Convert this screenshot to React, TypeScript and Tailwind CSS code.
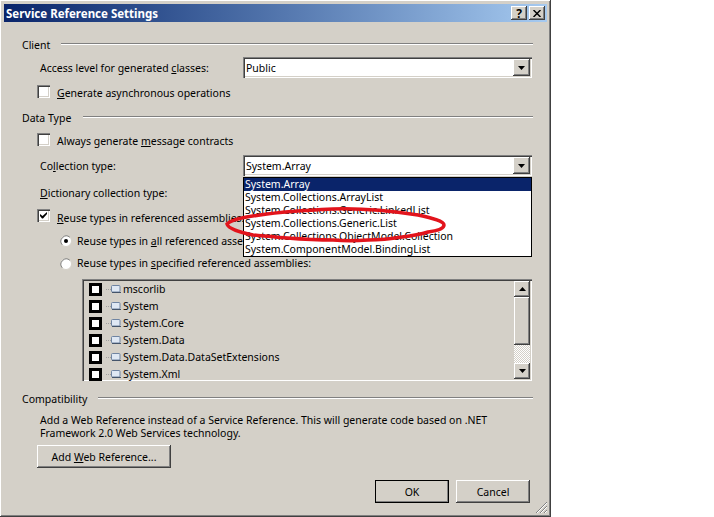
const raised = "shadow-[inset_-1px_-1px_0_#404040,inset_1px_1px_0_#fff,inset_-2px_-2px_0_#808080]"
const sunken = "shadow-[inset_1px_1px_0_#808080,inset_2px_2px_0_#404040,inset_-1px_-1px_0_#fff,inset_-2px_-2px_0_#d4d0c8]"

const dropItems = [
  "System.Array",
  "System.Collections.ArrayList",
  "System.Collections.Generic.LinkedList",
  "System.Collections.Generic.List",
  "System.Collections.ObjectModel.Collection",
  "System.ComponentModel.BindingList",
]

const assemblies = ["mscorlib", "System", "System.Core", "System.Data", "System.Data.DataSetExtensions", "System.Xml"]

function Arrow({ up = false }: { up?: boolean }) {
  return (
    <svg width="7" height="4" viewBox="0 0 7 4" className="block">
      <path d={up ? "M3.5 0 L7 4 L0 4 Z" : "M0 0 L7 0 L3.5 4 Z"} fill="#000" />
    </svg>
  )
}

function Section({ label, lineLeft }: { label: string; lineLeft: string }) {
  return (
    <div className="flex items-center h-[13px] pl-[22px] pr-[18px]">
      <span className="shrink-0 -mt-[1px]">{label}</span>
      <div className={`flex-1 border-t border-t-[#808080] border-b border-b-white h-[2px] mb-[3px] ${lineLeft}`} />
    </div>
  )
}

function Checkbox({ checked = false }: { checked?: boolean }) {
  return (
    <div className={`w-[13px] h-[13px] bg-white shrink-0 flex items-center justify-center ${sunken}`}>
      {checked && (
        <svg width="7" height="7" viewBox="0 0 7 7">
          <path d="M0 2 L0 4 L2 6.5 L3 6.5 L7 2 L7 0 L2.5 4 Z" fill="#000" />
        </svg>
      )}
    </div>
  )
}

function Radio({ checked = false }: { checked?: boolean }) {
  return (
    <svg width="12" height="12" viewBox="0 0 12 12" className="shrink-0">
      <circle cx="6" cy="6" r="5.5" fill="#fff" stroke="#d4d0c8" />
      <path d="M2.2 9.8 A5.4 5.4 0 0 1 9.8 2.2" fill="none" stroke="#808080" />
      {checked && <circle cx="6" cy="6" r="2" fill="#000" />}
    </svg>
  )
}

function Combo({ value }: { value: string }) {
  return (
    <div className={`w-[289px] h-[21px] bg-white flex items-center pl-[3px] pr-[2px] ${sunken}`}>
      <span className="flex-1 mt-[1px]">{value}</span>
      <div className={`w-[17px] h-[17px] bg-[#d4d0c8] flex items-center justify-center ${raised}`}>
        <Arrow />
      </div>
    </div>
  )
}

function Button({ children, className = "" }: { children: React.ReactNode; className?: string }) {
  return (
    <div className={`h-[23px] bg-[#d4d0c8] flex items-center justify-center ${raised} ${className}`}>
      <span className="mt-[2px]">{children}</span>
    </div>
  )
}

export default function App() {
  return (
    <div className="w-[714px] h-[517px] bg-white text-[#000] text-[10.5px] leading-[13px] overflow-hidden font-['Noto_Sans','Open_Sans',sans-serif]">
      <div className="relative w-[551px] h-[517px] bg-[#d4d0c8] flex flex-col px-[4px] pt-[4px] shadow-[inset_-1px_-1px_0_#404040,inset_1px_1px_0_#fff,inset_-2px_-2px_0_#808080]">
        {/* title bar */}
        <div className="h-[18px] shrink-0 pl-[2px] pr-[2px] flex items-center justify-between bg-gradient-to-r from-[#0a246a] to-[#a6caf0]">
          <span className="text-white font-bold text-[11.5px]">Service Reference Settings</span>
          <div className="flex gap-[2px]">
            <div className={`w-[16px] h-[14px] bg-[#d4d0c8] flex items-center justify-center font-bold text-[12px] ${raised}`}>?</div>
            <div className={`w-[16px] h-[14px] bg-[#d4d0c8] flex items-center justify-center ${raised}`}>
              <svg width="8" height="7" viewBox="0 0 8 7">
                <path d="M0.5 0 L7.5 7 M7.5 0 L0.5 7" stroke="#000" strokeWidth="1.5" />
              </svg>
            </div>
          </div>
        </div>

        {/* body */}
        <div className="-mx-[4px] flex flex-col flex-1 pt-[17px]">
          <Section label="Client" lineLeft="ml-[11px]" />

          <div className="flex items-center justify-between pl-[40px] pr-[19px] mt-[5px]">
            <span className="mt-[2px]">Access level for generated <u>c</u>lasses:</span>
            <Combo value="Public" />
          </div>

          <div className="flex items-center h-[13px] gap-[7px] pl-[37px] mt-[7px]">
            <Checkbox />
            <span className="mt-[4px]"><u>G</u>enerate asynchronous operations</span>
          </div>

          <div className="mt-[14px]">
            <Section label="Data Type" lineLeft="ml-[12px]" />
          </div>

          <div className="flex items-center h-[13px] gap-[7px] pl-[37px] mt-[8px]">
            <Checkbox />
            <span className="mt-[4px]">Always generate <u>m</u>essage contracts</span>
          </div>

          <div className="flex items-center justify-between pl-[40px] pr-[19px] mt-[9px]">
            <span className="mt-[2px]">Co<u>l</u>lection type:</span>
            <Combo value="System.Array" />
          </div>

          <div className="pl-[40px] mt-[11px]">
            <span><u>D</u>ictionary collection type:</span>
          </div>

          <div className="flex items-center h-[13px] gap-[7px] pl-[37px] mt-[9px]">
            <Checkbox checked />
            <span className="mt-[6px]"><u>R</u>euse types in referenced assemblies:</span>
          </div>

          <div className="flex items-center h-[13px] gap-[5px] pl-[60px] mt-[12px]">
            <Radio checked />
            <span className="mt-[2px]">Reuse types in <u>a</u>ll referenced assemblies</span>
          </div>

          <div className="flex items-center h-[13px] gap-[5px] pl-[60px] mt-[10px]">
            <Radio />
            <span>Reuse types in <u>s</u>pecified referenced assemblies:</span>
          </div>

          {/* assemblies list */}
          <div className={`ml-[82px] mt-[9px] w-[450px] h-[102px] flex p-[2px] ${sunken}`}>
            <div className="flex-1 pl-[5px] flex flex-col">
              {assemblies.map((name) => (
                <div key={name} className="h-[17px] flex items-center shrink-0">
                  <div className="w-[13px] h-[13px] border-[3px] border-black bg-white shrink-0 -mt-[1px]" />
                  <div className="ml-[4px] w-[5px] border-t border-dotted border-[#a0a0a0]" />
                  <svg width="10" height="9" viewBox="0 0 10 9" className="shrink-0">
                    <rect x="0.5" y="0.5" width="8.5" height="6.5" rx="1" fill="#dfe8f4" stroke="#6f84a2" />
                    <path d="M1 7.5 H10" stroke="#44546a" />
                  </svg>
                  <span className="ml-[2px]">{name}</span>
                </div>
              ))}
            </div>
            <div className="w-[16px] flex flex-col">
              <div className={`h-[16px] bg-[#d4d0c8] flex items-center justify-center ${raised}`}><Arrow up /></div>
              <div className={`h-[48px] bg-[#d4d0c8] ${raised}`} />
              <div className="flex-1 bg-[repeating-conic-gradient(#d4d0c8_0_25%,#fff_0_50%)] bg-[length:2px_2px]" />
              <div className={`h-[16px] bg-[#d4d0c8] flex items-center justify-center ${raised}`}><Arrow /></div>
            </div>
          </div>

          <div className="mt-[12px]">
            <Section label="Compatibility" lineLeft="ml-[11px]" />
          </div>

          <div className="pl-[40px] mt-[8px]">
            Add a Web Reference instead of a Service Reference. This will generate code based on .NET<br />
            Framework 2.0 Web Services technology.
          </div>

          <div className="pl-[37px] mt-[5px]">
            <Button className="w-[134px]">Add <u>W</u>eb Reference...</Button>
          </div>

          <div className="flex justify-end gap-[7px] pr-[21px] mt-[12px]">
            <Button className="w-[74px] outline outline-1 -outline-offset-1 outline-black">OK</Button>
            <Button className="w-[74px]">Cancel</Button>
          </div>
        </div>

        {/* dropdown list, open over the form */}
        <div className="absolute left-[243px] top-[177px] w-[289px] h-[80px] bg-white border border-black leading-[13px]">
          {dropItems.map((item, i) => (
            <div key={item} className={`h-[13px] pl-[1px] ${i === 0 ? "bg-[#0a246a] text-white" : ""}`}>{item}</div>
          ))}
        </div>

        {/* red marker ring */}
        <svg className="absolute left-0 top-0" width="551" height="517" viewBox="0 0 551 517" fill="none">
          <path d="M227 224 C232 219 246 217 260 215 C280 212 310 210 333 209 C360 208 385 210 418 215 C432 218 444 221 444 225 C444 229 436 231 428 232 C418 235 410 236 402 237 C390 239 380 240 368 240 C355 241 345 241 333 240 C318 240 300 239 287 238 C275 237 262 236 253 235 C240 232 228 229 227 224 Z" stroke="#e2141c" strokeWidth="3.5" />
        </svg>

        {/* resize grip */}
        <svg className="absolute right-[3px] bottom-[3px]" width="13" height="13" viewBox="0 0 13 13" fill="none">
          <path d="M12 1 L1 12 M12 5 L5 12 M12 9 L9 12" stroke="#808080" />
          <path d="M12 2 L2 12 M12 6 L6 12 M12 10 L10 12" stroke="#fff" />
        </svg>
      </div>
    </div>
  )
}
